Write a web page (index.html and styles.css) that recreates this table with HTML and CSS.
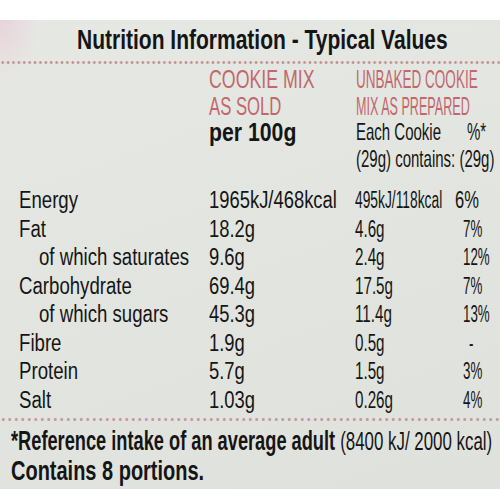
FILE: index.html
```html
<!DOCTYPE html>
<html lang="en">
<head>
  <meta charset="UTF-8">
  <meta name="viewport" content="width=device-width, initial-scale=1.0">
  <title>Nutrition Information</title>
  <link rel="stylesheet" href="styles.css">
</head>
<body>
  <div class="label">
    <h1 class="title"><span class="sq">Nutrition Information - Typical Values</span></h1>
    <div class="dots"></div>

    <div class="head">
      <div></div>
      <div class="col">
        <div class="pink sq">COOKIE MIX</div>
        <div class="pink sq sold">AS SOLD</div>
        <div class="per sq">per 100g</div>
      </div>
      <div class="col prep">
        <div class="pink sq wide">UNBAKED COOKIE</div>
        <div class="pink sq wide mix">MIX AS PREPARED</div>
        <div class="each sq">Each Cookie</div>
        <div class="each sq ri">%*</div>
        <div class="each sq wide">(29g) contains: (29g)</div>
      </div>
    </div>

    <div class="rows">
      <div class="name sq">Energy</div><div class="v1 sq">1965kJ/468kcal</div><div class="v2 sq kj">495kJ/118kcal</div><div class="pct sq first">6%</div>
      <div class="name sq">Fat</div><div class="v1 sq">18.2g</div><div class="v2 sq">4.6g</div><div class="pct sq">7%</div>
      <div class="name sq sub">of which saturates</div><div class="v1 sq">9.6g</div><div class="v2 sq">2.4g</div><div class="pct sq">12%</div>
      <div class="name sq">Carbohydrate</div><div class="v1 sq">69.4g</div><div class="v2 sq">17.5g</div><div class="pct sq">7%</div>
      <div class="name sq sub">of which sugars</div><div class="v1 sq">45.3g</div><div class="v2 sq">11.4g</div><div class="pct sq">13%</div>
      <div class="name sq">Fibre</div><div class="v1 sq">1.9g</div><div class="v2 sq">0.5g</div><div class="pct sq dash">-</div>
      <div class="name sq">Protein</div><div class="v1 sq">5.7g</div><div class="v2 sq">1.5g</div><div class="pct sq">3%</div>
      <div class="name sq">Salt</div><div class="v1 sq">1.03g</div><div class="v2 sq">0.26g</div><div class="pct sq">4%</div>
    </div>

    <div class="dots low"></div>
    <div class="foot">
      <div class="sq ref">*Reference intake of an average adult <span class="thin">(8400 kJ/ 2000 kcal)</span></div>
      <div class="sq portions">Contains 8 portions.</div>
    </div>
  </div>
</body>
</html>
```

FILE: styles.css
```css
:root {
  --panel: #e3e6e1;
  --ink: #151515;
  --pink: #c2676e;
  --dot: #c5979c;
}
body {
  margin: 0;
  background: #fff;
  color: var(--ink);
  font-family: 'Liberation Sans', Arial, sans-serif;
}
/* the label font is a condensed face, so squeeze Arial widths */
.sq {
  display: inline-block;
  white-space: nowrap;
  transform: scaleX(var(--sx, 0.8));
  transform-origin: 0 0;
}
.label {
  margin-top: 20px;
  height: 469px;
  background:
    radial-gradient(ellipse 40px 60px at 0 0, #e8d3dc, transparent),
    linear-gradient(160deg, #e6e8e3, #dfe2dc);
  overflow: hidden;
}
.title {
  margin: 0;
  padding: 3px 0 0 77px;
  font-size: 28px;
  font-weight: bold;
  line-height: 34px;
}
.title .sq { --sx: 0.75; }
.dots {
  height: 3px;
  margin-top: 4px;
  background: radial-gradient(circle, var(--dot) 1.2px, transparent 1.7px) 0 0 / 5.4px 3px repeat-x;
}
.dots.low {
  margin-top: 4px;
  background-size: 6.5px 3px;
}
.head {
  display: grid;
  grid-template-columns: 209px 147px 1fr;
  padding-top: 2px;
  line-height: 26.5px;
}
.col > div { display: block; }
.prep {
  display: grid;
  grid-template-columns: 111px 1fr;
}
.prep .wide { grid-column: 1 / -1; }
.pink {
  color: var(--pink);
  font-size: 26.5px;
  --sx: 0.67;
}
.pink.sold { --sx: 0.63; }
.pink.wide { --sx: 0.51; }
.pink.mix { --sx: 0.475; }
.per {
  font-size: 25px;
  font-weight: bold;
  --sx: 0.85;
}
.each {
  font-size: 24px;
  --sx: 0.625;
}
.rows {
  display: grid;
  grid-template-columns: 209px 146px 108px 1fr;
  font-size: 23px;
  line-height: 28.5px;
  padding-top: 14px;
}
.name { margin-left: 19px; --sx: 0.81; }
.name.sub { margin-left: 39px; }
.v1 { --sx: 0.8; }
.v2 { --sx: 0.66; }
.v2.kj { --sx: 0.6; }
.pct { --sx: 0.58; }
.pct.first { margin-left: -8px; --sx: 0.72; }
.pct.dash { margin-left: 6px; }
.foot {
  margin-top: 5px;
  padding-left: 11px;
  font-size: 27px;
  font-weight: bold;
  line-height: 30px;
}
.foot .sq { display: block; }
.ref { --sx: 0.675; }
.thin {
  font-weight: normal;
  font-size: 25px;
}
.portions { --sx: 0.74; }
```
